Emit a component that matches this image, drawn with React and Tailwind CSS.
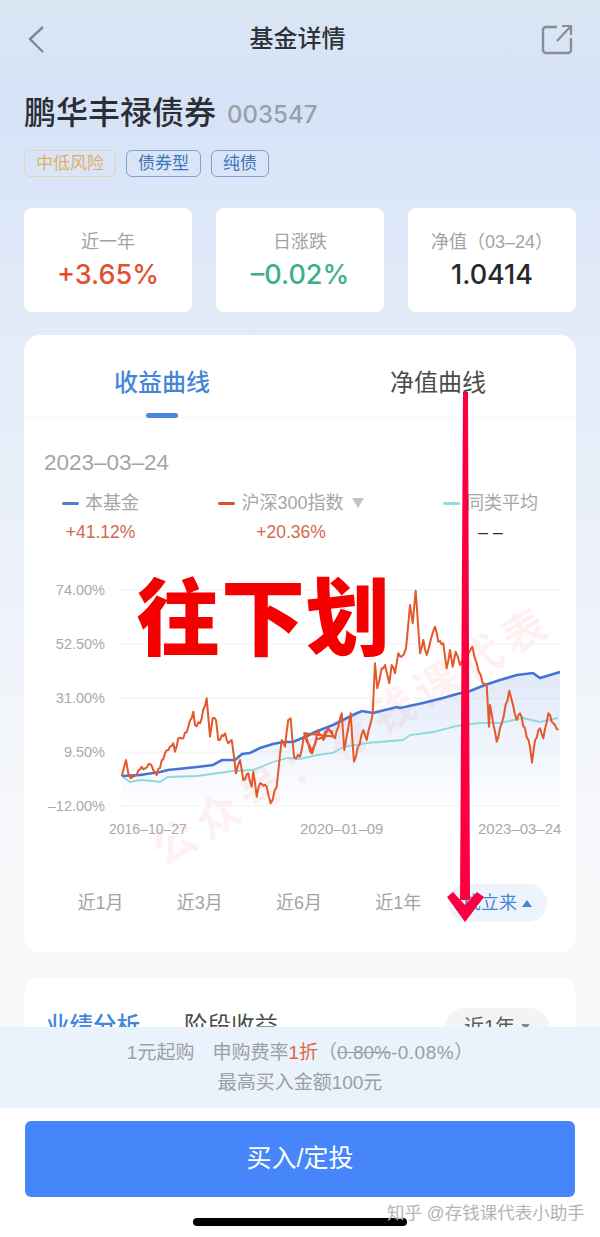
import React from "react";

// chart points read off the screenshot, in page pixels after toPage()
const toPage = (x0) => (pts) => pts.map(([x, y]) => [x0 + x / 3, 570 + y / 3]);

const orangeLeft = toPage(40)([
  [245, 618], [258, 570], [265, 610], [272, 625], [285, 618], [305, 590], [315, 595], [330, 582],
  [350, 615], [375, 550], [390, 530], [400, 520], [405, 545], [415, 505], [430, 505], [445, 470],
  [460, 425], [465, 465], [480, 460], [500, 385], [510, 500], [518, 445], [528, 450], [535, 510],
  [555, 490], [565, 520], [575, 510], [588, 610], [600, 570], [610, 630], [625, 610], [635, 650],
  [640, 605], [650, 680], [660, 640], [680, 650], [692, 700], [710, 650], [725, 510], [735, 530],
  [745, 450], [752, 445], [762, 560], [780, 560], [795, 490], [800, 515], [815, 550], [830, 505],
  [845, 505], [865, 475], [885, 500],
]);

const orangeRight = toPage(300)([
  [12, 490], [25, 520], [37, 550], [55, 480], [70, 510], [85, 475], [105, 505], [125, 430],
  [133, 540], [152, 430], [162, 575], [190, 480], [200, 510], [218, 430], [225, 280], [232, 355],
  [245, 295], [255, 285], [268, 340], [275, 285], [285, 310], [295, 250], [305, 260], [318, 235],
  [330, 105], [338, 160], [347, 62], [360, 250], [370, 210], [380, 255], [392, 210], [405, 170],
  [415, 215], [430, 220], [440, 295], [450, 240], [458, 290], [467, 245], [480, 285], [500, 260],
  [517, 230], [530, 280], [548, 340], [560, 345], [567, 470], [570, 405], [590, 515], [605, 460],
  [628, 362], [650, 450], [660, 430], [690, 530], [696, 578], [705, 510], [720, 475], [730, 505],
  [745, 430], [760, 460], [775, 480],
]);

const bluePts = [
  [122, 776], [140, 775], [160, 772], [168, 770], [197, 767], [213, 765], [222, 760], [235, 760],
  [242, 754], [250, 753], [260, 748], [273, 744], [283, 742], [293, 742], [307, 736], [315, 732],
  [333, 725], [355, 714], [362, 711], [373, 713], [397, 707], [400, 708], [423, 703], [443, 698],
  [457, 694], [470, 691], [485, 685], [500, 680], [517, 675], [533, 673], [540, 678], [560, 672],
];

const cyanPts = [
  [122, 776], [130, 782], [140, 780], [153, 781], [160, 782], [168, 777], [197, 776], [233, 771],
  [253, 770], [273, 762], [288, 758], [300, 759], [317, 755], [333, 753], [343, 747], [367, 743],
  [403, 740], [410, 735], [433, 732], [457, 726], [470, 724], [480, 723], [500, 723], [523, 718],
  [540, 722], [558, 718],
];

const toPath = (pts) => pts.map(([x, y], i) => `${i ? "L" : "M"}${x.toFixed(1)} ${y.toFixed(1)}`).join(" ");

// the index line is much more jagged than the points above, add a fixed wobble
const jagged = (pts) => {
  const out = [];
  pts.forEach((p, i) => {
    out.push(p);
    const next = pts[i + 1];
    if (!next) return;
    const steps = Math.floor((next[0] - p[0]) / 1.6);
    for (let s = 1; s < steps; s++) {
      const t = s / steps;
      const wobble = Math.sin(i * 7.3 + s * 2.9) * 1.8;
      out.push([p[0] + (next[0] - p[0]) * t, p[1] + (next[1] - p[1]) * t + wobble]);
    }
  });
  return out;
};

const gridY = [590, 644, 698, 752, 806];
const yLabels = ["74.00%", "52.50%", "31.00%", "9.50%", "–12.00%"];

function Chart() {
  return (
    <svg viewBox="24 570 552 280" className="block h-[280px] w-[552px] overflow-visible">
      <defs>
        <linearGradient id="area" x1="0" y1="0" x2="0" y2="1">
          <stop offset="0" stopColor="#4a7fdc" stopOpacity="0.17" />
          <stop offset="1" stopColor="#4a7fdc" stopOpacity="0.01" />
        </linearGradient>
      </defs>
      <text
        x="352"
        y="751"
        textAnchor="middle"
        fontSize="44"
        fontWeight="700"
        letterSpacing="7"
        fill="#f22"
        fillOpacity="0.08"
        transform="rotate(-31 352 735)"
      >
        公众号：存钱课代表
      </text>
      {gridY.map((y, i) => (
        <g key={y}>
          <line x1="120" x2="560" y1={y} y2={y} stroke="#f1f2f4" strokeWidth="1" />
          <text x="105" y={y + 5} textAnchor="end" fontSize="14.5" fill="#a9a9a9">
            {yLabels[i]}
          </text>
        </g>
      ))}
      <path d={`${toPath(bluePts)} L560 806 L122 806 Z`} fill="url(#area)" />
      <path d={toPath(cyanPts)} fill="none" stroke="#8fd8dc" strokeWidth="1.8" />
      <path d={toPath(bluePts)} fill="none" stroke="#4474d6" strokeWidth="2.6" />
      <path
        d={toPath(jagged([...orangeLeft, ...orangeRight]))}
        fill="none"
        stroke="#e5582a"
        strokeWidth="2"
        strokeLinejoin="round"
      />
      <text x="109" y="834" fontSize="14" fill="#a9a9a9">2016–10–27</text>
      <text x="300" y="834" fontSize="15" fill="#a9a9a9">2020–01–09</text>
      <text x="478" y="834" fontSize="15" fill="#a9a9a9">2023–03–24</text>
    </svg>
  );
}

function Tag({ className, children }) {
  return (
    <span className={`flex h-[27px] items-center rounded-md border px-[11px] text-[17px] ${className}`}>
      {children}
    </span>
  );
}

function Stat({ label, value, className }) {
  return (
    <div className="flex h-[104px] flex-col items-center rounded-lg bg-white pt-[21px]">
      <div className="text-[18px] leading-[26px] text-[#a3a3a3]">{label}</div>
      <div className={`mt-[1px] font-['Inter'] text-[27px] font-medium leading-[38px] ${className}`}>{value}</div>
    </div>
  );
}

function Legend({ color, label, value, valueClass, arrow }) {
  return (
    <div className="flex flex-col items-center">
      <div className="flex h-[28px] items-center text-[18px] text-[#a6a6a6]">
        <span className={`mr-[6px] h-[3px] w-[17px] rounded-sm ${color}`} />
        {label}
        {arrow && (
          <svg viewBox="0 0 12 10" className="ml-[8px] h-[10px] w-[12px]">
            <path d="M0 0 H12 L6 10 Z" fill="#c4c4c4" />
          </svg>
        )}
      </div>
      <div className={`mt-[1px] h-[28px] text-[17.5px] leading-[28px] ${valueClass}`}>{value}</div>
    </div>
  );
}

export default function App() {
  return (
    <div className="relative flex h-[1237px] w-[600px] flex-col overflow-hidden bg-white font-['Liberation_Sans','Noto_Sans_CJK_SC',sans-serif]">
      <main className="min-h-0 flex-1 overflow-hidden bg-[linear-gradient(180deg,#dbe6f4_0%,#d6e3f7_110px,#e3ebf8_330px,#f5f7fa_800px,#f7f8f9_1027px)]">
        <header className="flex h-[78px] items-center justify-between pl-[26px] pr-[27px]">
          <svg viewBox="0 0 20 30" className="h-[30px] w-[20px]">
            <path d="M17 3 L4 15 L17 28" fill="none" stroke="#7f8790" strokeWidth="2.4" />
          </svg>
          <h1 className="ml-[8px] text-[24px] font-medium text-[#2f3338]">基金详情</h1>
          <svg viewBox="0 0 32 32" className="h-[32px] w-[32px]">
            <path
              d="M16 4 H5 a3 3 0 0 0 -3 3 V27 a3 3 0 0 0 3 3 H27 a3 3 0 0 0 3 -3 V15"
              fill="none"
              stroke="#868d95"
              strokeWidth="2.4"
            />
            <path d="M16 18 L30 3 M21 3 H30 V12" fill="none" stroke="#868d95" strokeWidth="2.2" />
          </svg>
        </header>

        <div className="px-[24px]">
          <div className="flex h-[70px] items-center">
            <span className="text-[32px] font-medium leading-[40px] text-[#2b2e33]">鹏华丰禄债券</span>
            <span className="ml-[11px] mt-[3px] font-['Inter'] text-[24px] font-medium text-[#9b9fa6]">003547</span>
          </div>
          <div className="mt-[2px] flex gap-[10px]">
            <Tag className="border-[#e2d3bd] text-[#e3ad62]">中低风险</Tag>
            <Tag className="border-[#7fa3cf] text-[#3f75b8]">债券型</Tag>
            <Tag className="border-[#7fa3cf] text-[#3f75b8]">纯债</Tag>
          </div>

          <div className="mt-[31px] grid grid-cols-3 gap-[24px]">
            <Stat label="近一年" value="+3.65%" className="text-[#e2512f]" />
            <Stat label="日涨跌" value="–0.02%" className="text-[#3fae8f]" />
            <Stat label="净值（03–24）" value="1.0414" className="text-[#26282c]" />
          </div>

          <section className="mt-[23px] h-[617px] rounded-2xl bg-white">
            <div className="grid h-[83px] grid-cols-2 border-b border-[#f5f6f7] text-[24px]">
              <div className="relative flex items-center justify-center pt-[14px] font-medium text-[#4386dc]">
                收益曲线
                <span className="absolute bottom-[-1px] left-[122px] h-[5px] w-[32px] rounded-sm bg-[#4a86dc]" />
              </div>
              <div className="flex items-center justify-center pt-[14px] text-[#4b4b4b]">净值曲线</div>
            </div>
            <div className="pl-[20px] pt-[31px] text-[22.5px] leading-[28px] text-[#a5a5a5]">2023–03–24</div>
            <div className="mt-[12px] flex justify-between px-[38px]">
              <Legend color="bg-[#4a80d8]" label="本基金" value="+41.12%" valueClass="text-[#d5674c]" />
              <Legend color="bg-[#d9512f]" label="沪深300指数" value="+20.36%" valueClass="text-[#d5674c]" arrow />
              <Legend color="bg-[#93dbdd]" label="同类平均" value="– –" valueClass="text-[#2b2b2b]" />
            </div>
            <div className="mt-[24px]">
              <Chart />
            </div>
            <div className="mt-[34px] grid grid-cols-5 pl-[27px] pr-[29px] text-[18px] text-[#a3a3a3]">
              <div className="flex h-[38px] items-center justify-center">近1月</div>
              <div className="flex h-[38px] items-center justify-center">近3月</div>
              <div className="flex h-[38px] items-center justify-center">近6月</div>
              <div className="flex h-[38px] items-center justify-center">近1年</div>
              <div className="flex h-[38px] items-center justify-center rounded-full bg-[#edf4fb] text-[#4386dc]">
                成立来
                <svg viewBox="0 0 10 7" className="ml-[5px] h-[7px] w-[10px]">
                  <path d="M5 0 L10 7 H0 Z" fill="#4386dc" />
                </svg>
              </div>
            </div>
          </section>

          <section className="mt-[25px] h-[200px] rounded-2xl bg-white pl-[22px] pr-[27px] pt-[31px]">
            <div className="flex items-center">
              <span className="text-[23.5px] font-medium text-[#4386dc]">业绩分析</span>
              <span className="ml-[44px] text-[23.5px] text-[#4b4b4b]">阶段收益</span>
              <span className="ml-auto flex h-[38px] w-[104px] items-center justify-center rounded-full bg-[#f3f4f5] text-[20px] text-[#5c5c5c]">
                近1年
                <svg viewBox="0 0 10 7" className="ml-[6px] h-[6px] w-[9px]">
                  <path d="M0 0 H10 L5 7 Z" fill="#8a8a8a" />
                </svg>
              </span>
            </div>
          </section>
        </div>
      </main>

      <div className="flex h-[81px] flex-col items-center bg-[#eaf2fb] pt-[11px] text-[19px] leading-[30px] text-[#9a9ea5]">
        <div>
          1元起购<span className="ml-[18px]">申购费率</span>
          <span className="text-[#e2663f]">1折</span>（<span className="line-through">0.80%</span>
          <span className="tracking-[0.5px]">-0.08%</span>）
        </div>
        <div>最高买入金额100元</div>
      </div>

      <div className="flex h-[129px] flex-col items-center bg-white px-[25px] pt-[13px]">
        <button className="h-[76px] w-full rounded-md bg-[#4785fb] text-[25px] text-white">买入/定投</button>
        <div className="mt-[21px] h-[8px] w-[214px] rounded-full bg-black" />
      </div>

      {/* stuff drawn on top of the screenshot afterwards */}
      <div className="absolute left-[136px] top-[564px] text-[84px] font-black leading-[112px] tracking-[1px] text-[#f50000]">
        往下划
      </div>
      <svg viewBox="0 0 600 1237" className="pointer-events-none absolute left-0 top-0 h-[1237px] w-[600px]">
        <path d="M463 392 H468 L470 900 H460 Z" fill="#fb0040" />
        <path d="M447 897 L453 892 L465 905 L477 892 L484 897 L465 922 Z" fill="#fb0040" />
      </svg>
      <div className="absolute left-[387px] top-[1201px] text-[17.5px] leading-[24px] text-[#b4b4b4]">
        知乎 @存钱课代表小助手
      </div>
    </div>
  );
}
